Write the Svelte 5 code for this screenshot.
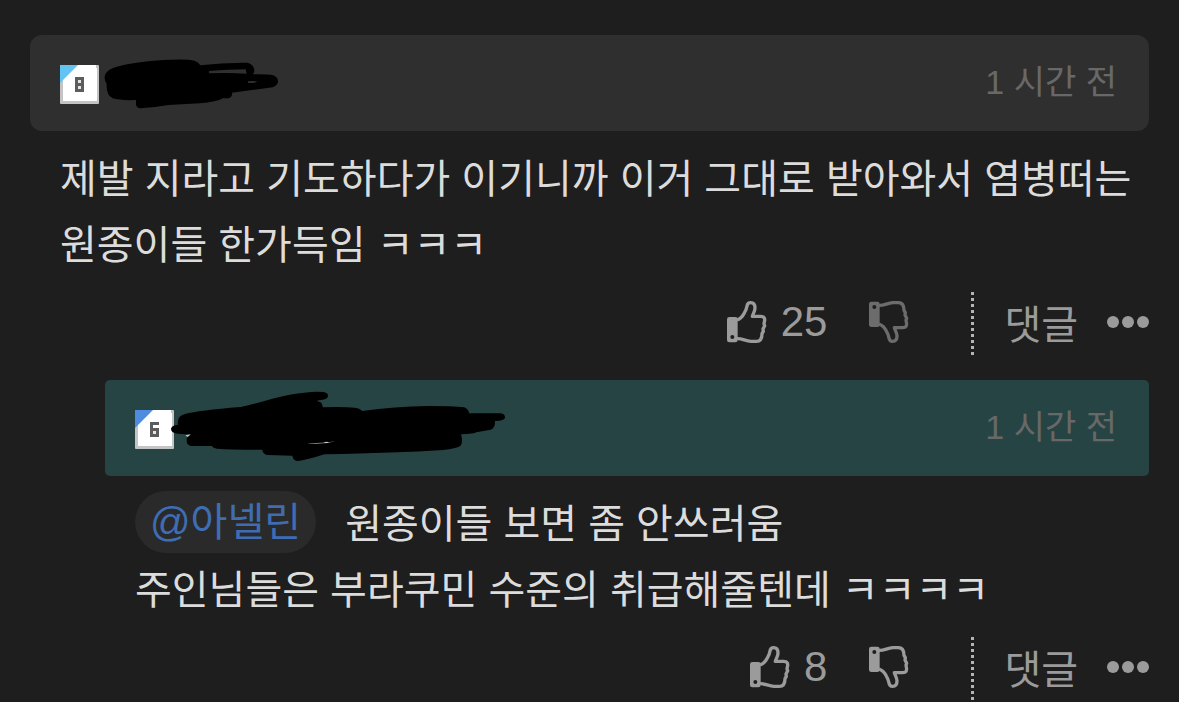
<script>
  const comments = [
    {
      id: 1,
      level: 8,
      corner: '#62c3f5',
      reply: false,
      mention: null,
      lines: ['제발 지라고 기도하다가 이기니까 이거 그대로 받아와서 염병떠는 원종이들 한가득임 ㅋㅋㅋ'],
      likes: 25,
      dimDislike: true
    },
    {
      id: 2,
      level: 6,
      corner: '#4f8be0',
      reply: true,
      mention: '@아넬린',
      lines: ['원종이들 보면 좀 안쓰러움', '주인님들은 부라쿠민 수준의 취급해줄텐데 ㅋㅋㅋㅋ'],
      likes: 8,
      dimDislike: false
    }
  ];
</script>

{#snippet thumb()}
  <rect x="0" y="48" width="32" height="76" rx="7" fill="currentColor" />
  <circle cx="16" cy="108" r="6" fill="#1e1e1e" />
  <path
    d="M30 57C42 53 47 46 52 36C57 27 59 22 60 15C61 7 66 5 71 5C80 5 84 12 84 21C84 31 78 38 76 46H101C112 46 115 53 112 63L111 69L113 74L108 84L109 91L105 98C105 112 101 121 88 121H72C55 120 45 112 30 113"
    fill="none"
    stroke="currentColor"
    stroke-width="10"
    stroke-linejoin="round"
  />
{/snippet}

<main>
  {#each comments as c (c.id)}
    <article id="comment-{c.id}" class:reply={c.reply}>
      <header>
        <div class="author">
          <svg class="badge" viewBox="0 0 39 39" role="img" aria-label="레벨 {c.level}">
            <rect width="39" height="39" rx="1" fill="#c4c4c4" />
            <path d="M3 0H36V3H37V36H3Z" fill="#fff" />
            <path d="M0 0H18L0 18Z" fill={c.corner} />
            {#if c.level === 8}
              <path d="M15 12H24V27H15Z" fill="#5c5c5c" />
              <path d="M18 15H21V18H18ZM18 21H21V24H18Z" fill="#e4e4e4" />
            {:else}
              <path d="M15 12H24V15H18V18H24V27H15Z" fill="#5c5c5c" />
              <path d="M18 21H21V24H18Z" fill="#e4e4e4" />
            {/if}
          </svg>
          {#if c.level === 8}
            <svg class="scribble" viewBox="237 30 540 288" aria-hidden="true">
              <path
                d="M256 148Q262 133 290 125Q350 110 430 105Q500 101 523 107Q535 111 541 121Q610 112 682 113Q700 117 703 134Q704 144 698 148Q740 147 760 151Q774 157 774 170Q772 181 758 187Q705 194 636 203Q638 216 626 220H609Q590 231 540 235L445 240Q400 248 362 250Q350 249 348 239V225Q300 227 278 220Q258 210 260 176Q250 161 256 148Z"
              />
              <path
                class="gap"
                d="M567 138Q630 133 677 133L680 146Q625 143 567 145ZM684 169Q700 166 712 170Q700 175 684 174Z"
              />
            </svg>
          {:else}
            <svg class="scribble" viewBox="237 30 540 288" aria-hidden="true">
              <path
                d="M228 176Q230 165 249 164Q244 139 270 132Q310 121 437 111C500 98 560 73 628 68Q660 64 685 66Q699 68 699 78Q698 88 683 89L665 92L679 98L684 112Q740 110 779 113Q797 115 801 123Q900 110 1000 108Q1070 108 1108 112Q1122 119 1122 130H1217Q1230 131 1230 143Q1229 152 1200 153Q1201 174 1187 179L1144 187Q1138 192 1098 193Q1105 215 1097 227Q1082 236 1045 240Q900 249 688 253Q640 269 610 273Q594 273 592 257L518 255Q503 252 502 239Q410 239 366 236Q354 234 350 228H290Q273 226 275 207Q276 199 287 194L251 191Q228 190 228 176Z"
              />
              <path
                d="M271 196L287 193L278 201ZM640 221Q664 218 684 218L694 215L702 217L722 213L698 219L640 222Z"
                fill="#c4cccc"
              />
            </svg>
          {/if}
        </div>
        <time>1 시간 전</time>
      </header>

      <div class="body">
        {#each c.lines as line, i}
          <p>
            {#if c.mention && i === 0}<a class="mention" href="#comment-1">{c.mention}</a>{/if}
            {line}
          </p>
        {/each}
      </div>

      <footer>
        <button class="like" aria-label="추천 {c.likes}">
          <svg class="thumb" viewBox="0 0 120 126" aria-hidden="true">{@render thumb()}</svg>
          <span>{c.likes}</span>
        </button>
        <button class="dislike" class:dim={c.dimDislike} aria-label="비추천">
          <svg class="thumb" viewBox="0 0 120 126" aria-hidden="true">
            <g transform="matrix(1 0 0 -1 0 126)">{@render thumb()}</g>
          </svg>
        </button>
        <span class="divider"></span>
        <button class="write">댓글</button>
        <button class="more" aria-label="더보기">
          <svg viewBox="0 0 42 12" aria-hidden="true" fill="currentColor">
            <circle cx="6" cy="6" r="6" />
            <circle cx="21" cy="6" r="6" />
            <circle cx="36" cy="6" r="6" />
          </svg>
        </button>
      </footer>
    </article>
  {/each}
</main>

<style>
  :global(body) {
    background: #1e1e1e;
  }

  main {
    padding: 35px 30px 0;
    font-family: 'Liberation Sans', 'Noto Sans CJK KR', sans-serif;
    font-size: 40px;
    color: #dcdcdc;
  }

  article.reply {
    margin: 25px 0 0 75px;
  }

  header {
    display: flex;
    align-items: center;
    justify-content: space-between;
    height: 96px;
    padding: 0 32px 0 30px;
    border-radius: 12px;
    background: #2f2f2f;
    color: #686868;
  }

  .reply header {
    border-radius: 5px;
    background: #264443;
  }

  .author {
    display: flex;
    align-items: center;
  }

  .badge {
    width: 39px;
    height: 39px;
    margin-top: 3px;
  }

  .scribble {
    width: 180px;
    height: 96px;
    overflow: visible;
  }

  .gap {
    fill: #2f2f2f;
  }

  time {
    padding-bottom: 8px;
    font-size: 34px;
  }

  .body {
    padding: 15px 0 11px 30px;
  }

  p {
    margin: 0;
    line-height: 66px;
  }

  .mention {
    display: inline-block;
    margin-right: 18px;
    padding: 0 15px;
    border-radius: 32px;
    background: #2a2a2a;
    color: #3f6db3;
    line-height: 62px;
    text-decoration: none;
    vertical-align: 2px;
  }

  footer {
    display: flex;
    align-items: center;
    justify-content: flex-end;
    height: 66px;
    color: #9b9b9b;
  }

  button {
    display: flex;
    align-items: center;
    padding: 0;
    border: 0;
    background: none;
    color: inherit;
    font: inherit;
    cursor: pointer;
  }

  .like {
    gap: 14px;
    font-size: 42px;
  }

  .thumb {
    width: 40px;
    height: 42px;
  }

  .dislike {
    margin: 0 62px 0 42px;
  }

  .dim {
    color: #6c6c6c;
  }

  .divider {
    align-self: flex-end;
    width: 3px;
    height: 63px;
    background: repeating-linear-gradient(#b4b4b4 0 3px, transparent 3px 6px);
  }

  .write {
    margin: 0 29px 0 30px;
  }

  .more svg {
    width: 42px;
    height: 12px;
  }
</style>
